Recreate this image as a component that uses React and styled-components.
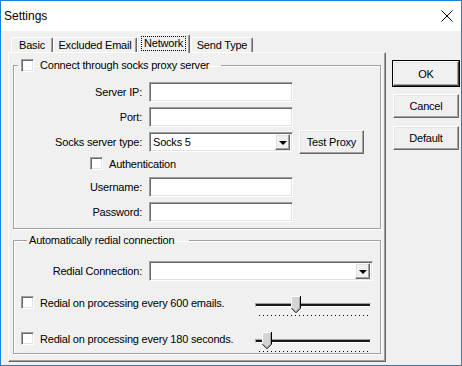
import styled, { createGlobalStyle } from "styled-components";

const GlobalStyle = createGlobalStyle`
    html, body {
        margin: 0;
        padding: 0;
        background: #fff;
    }
    body {
        font-family: "Liberation Sans", Arial, sans-serif;
        font-size: 11px;
        letter-spacing: -0.2px;
        color: #000;
    }
    * {
        box-sizing: border-box;
    }
`;

const sunken = `
    border: 1px solid;
    border-color: #a0a0a0 #fff #fff #a0a0a0;
    box-shadow: inset 1px 1px 0 #696969, inset -1px -1px 0 #e3e3e3;
    background: #fff;
`;

const raised = `
    border: 1px solid;
    border-color: #fff #696969 #696969 #fff;
    box-shadow: inset -1px -1px 0 #a0a0a0, inset 1px 1px 0 #e3e3e3;
    background: #f0f0f0;
`;

const Window = styled.div`
    width: 462px;
    height: 366px;
    border: 1px solid #1883d7;
    background: #f0f0f0;
    display: flex;
    flex-direction: column;
`;

const TitleBar = styled.div`
    flex: none;
    height: 30px;
    background: #fff;
    display: flex;
    align-items: center;
    justify-content: space-between;
    padding: 0 8px 0 3px;
`;

const Title = styled.span`
    font-size: 12px;
    letter-spacing: 0;
`;

const Body = styled.div`
    flex: 1;
    display: flex;
    gap: 7px;
    padding: 3px 2px 0 7px;
`;

const Main = styled.div`
    width: 378px;
    display: flex;
    flex-direction: column;
`;

const TabStrip = styled.div`
    height: 18px;
    display: flex;
    align-items: flex-end;
    padding-left: 3px;
    position: relative;
    z-index: 1;
`;

const Tab = styled.div`
    width: ${(p) => p.$w}px;
    height: ${(p) => (p.$active ? 19 : 15)}px;
    margin-bottom: ${(p) => (p.$active ? -1 : 0)}px;
    margin-left: ${(p) => p.$ml || 0}px;
    display: flex;
    align-items: ${(p) => (p.$active ? "flex-start" : "center")};
    padding-top: ${(p) => (p.$active ? 1 : 0)}px;
    justify-content: center;
    background: #f0f0f0;
    border-top: 1px solid #fff;
    border-left: 1px solid #fff;
    border-right: 1px solid #696969;
    border-radius: 2px 2px 0 0;
    box-shadow: inset -1px 0 0 #a0a0a0;
    white-space: nowrap;
`;

const Focus = styled.span`
    border: 1px dotted #000;
    padding: 0 2px;
    line-height: 13px;
`;

const Panel = styled.div`
    height: 310px;
    border: 1px solid;
    border-color: #fff #696969 #696969 #fff;
    box-shadow: inset -1px -1px 0 #a0a0a0;
    padding: 0 4px;
    display: flex;
    flex-direction: column;
`;

const Group = styled.fieldset`
    margin: ${(p) => p.$mt}px 0 0;
    padding: ${(p) => p.$pt}px 0 ${(p) => p.$pb}px;
    min-width: 0;
    border: 1px solid #a0a0a0;
    box-shadow: inset 1px 1px 0 #fff, 1px 1px 0 #fff;
`;

const Legend = styled.legend`
    margin-left: ${(p) => p.$ml}px;
    padding: 0 ${(p) => p.$pr}px 0 ${(p) => p.$pl}px;
    height: 13px;
    line-height: 13px;
    display: flex;
    align-items: center;
    gap: 6px;
    white-space: nowrap;
`;

const Row = styled.div`
    display: flex;
    align-items: center;
    height: ${(p) => p.$h || 20}px;
    margin-top: ${(p) => p.$mt ?? 5}px;
    padding-left: ${(p) => p.$pl || 0}px;
`;

const Label = styled.span`
    width: 135px;
    padding-right: 7px;
    text-align: right;
    white-space: nowrap;
`;

const TextBox = styled.div`
    ${sunken}
    width: ${(p) => p.$w || 144}px;
    height: 20px;
`;

const Combo = styled.div`
    ${sunken}
    width: ${(p) => p.$w || 144}px;
    height: 20px;
    display: flex;
    align-items: center;
    justify-content: space-between;
    padding: 2px 2px 2px 3px;
`;

const DropButton = styled.span`
    ${raised}
    width: 15px;
    height: 16px;
    display: flex;
    align-items: center;
    justify-content: center;

    &::after {
        content: "";
        border-left: 4px solid transparent;
        border-right: 4px solid transparent;
        border-top: 4px solid #000;
        margin-top: 1px;
    }
`;

const Button = styled.div`
    ${raised}
    width: ${(p) => p.$w || 66}px;
    height: ${(p) => p.$h || 24}px;
    display: flex;
    align-items: center;
    justify-content: center;
    white-space: nowrap;
    margin-left: ${(p) => p.$ml || 0}px;
    ${(p) =>
        p.$default &&
        `
        outline: 1px solid #000;
        outline-offset: 0;
        border-color: #fff #404040 #404040 #fff;
    `}
`;

const CheckBox = styled.span`
    ${sunken}
    flex: none;
    width: 13px;
    height: 13px;
`;

const CheckLabel = styled.label`
    display: flex;
    align-items: center;
    gap: 6px;
    height: 13px;
    white-space: nowrap;
`;

const SliderRow = styled.div`
    display: flex;
    align-items: flex-start;
    justify-content: space-between;
    margin-top: ${(p) => p.$mt}px;
    padding: 0 9px 0 7px;
`;

const SliderBox = styled.div`
    position: relative;
    width: 116px;
    height: 20px;
    padding-top: 7px;
`;

const Track = styled.div`
    height: 4px;
    border: 1px solid;
    border-color: #a0a0a0 #fff #fff #a0a0a0;
    background: #1a1a1a;
`;

const Ticks = styled.div`
    margin: 8px 0 0 4px;
    width: 109px;
    height: 1px;
    background: repeating-linear-gradient(
        to right,
        #000 0 1px,
        transparent 1px 4px
    );
`;

const Thumb = styled.svg`
    position: absolute;
    top: 0;
    left: ${(p) => p.$pos}px;
`;

const Side = styled.div`
    display: flex;
    flex-direction: column;
    gap: 8px;
    padding-top: 27px;
`;

function CloseIcon() {
    return (
        <svg width="12" height="12" viewBox="0 0 12 12">
            <path d="M0.5 0.5 L11.5 11.5 M11.5 0.5 L0.5 11.5" stroke="#000" strokeWidth="1" />
        </svg>
    );
}

function Slider({ pos }) {
    return (
        <SliderBox>
            <Track />
            <Thumb $pos={pos} width="10" height="17" viewBox="0 0 10 17">
                <polygon points="0,0 10,0 10,12 5,17 0,12" fill="#d4d4d4" />
                <polyline points="0.5,12 0.5,0.5 9,0.5" fill="none" stroke="#fff" />
                <polyline points="9.5,0 9.5,12.2 5,16.7 0.5,12.2" fill="none" stroke="#000" />
                <polyline points="8.5,1 8.5,11.8 5,15.3" fill="none" stroke="#a0a0a0" />
            </Thumb>
            <Ticks />
        </SliderBox>
    );
}

export default function App() {
    return (
        <>
            <GlobalStyle />
            <Window>
                <TitleBar>
                    <Title>Settings</Title>
                    <CloseIcon />
                </TitleBar>
                <Body>
                    <Main>
                        <TabStrip>
                            <Tab $w={42}>Basic</Tab>
                            <Tab $w={84}>Excluded Email</Tab>
                            <Tab $w={53} $active>
                                <Focus>Network</Focus>
                            </Tab>
                            <Tab $w={62} $ml={1}>
                                Send Type
                            </Tab>
                        </TabStrip>
                        <Panel>
                            <Group $mt={6} $pt={10} $pb={6}>
                                <Legend $ml={4} $pl={3} $pr={12}>
                                    <CheckBox />
                                    Connect through socks proxy server
                                </Legend>
                                <Row $mt={0}>
                                    <Label>Server IP:</Label>
                                    <TextBox />
                                </Row>
                                <Row>
                                    <Label>Port:</Label>
                                    <TextBox />
                                </Row>
                                <Row>
                                    <Label>Socks server type:</Label>
                                    <Combo>
                                        Socks 5
                                        <DropButton />
                                    </Combo>
                                    <Button $w={65} $ml={6}>
                                        Test Proxy
                                    </Button>
                                </Row>
                                <Row $h={13} $pl={76}>
                                    <CheckLabel>
                                        <CheckBox />
                                        Authentication
                                    </CheckLabel>
                                </Row>
                                <Row $mt={7}>
                                    <Label>Username:</Label>
                                    <TextBox />
                                </Row>
                                <Row>
                                    <Label>Password:</Label>
                                    <TextBox />
                                </Row>
                            </Group>
                            <Group $mt={5} $pt={14} $pb={1}>
                                <Legend $ml={13} $pl={2} $pr={15}>
                                    Automatically redial connection
                                </Legend>
                                <Row $mt={0}>
                                    <Label>Redial Connection:</Label>
                                    <Combo $w={224}>
                                        <span />
                                        <DropButton />
                                    </Combo>
                                </Row>
                                <SliderRow $mt={15}>
                                    <CheckLabel>
                                        <CheckBox />
                                        Redial on processing every 600 emails.
                                    </CheckLabel>
                                    <Slider pos={36} />
                                </SliderRow>
                                <SliderRow $mt={16}>
                                    <CheckLabel>
                                        <CheckBox />
                                        Redial on processing every 180 seconds.
                                    </CheckLabel>
                                    <Slider pos={7} />
                                </SliderRow>
                            </Group>
                        </Panel>
                    </Main>
                    <Side>
                        <Button $default $h={25}>
                            OK
                        </Button>
                        <Button>Cancel</Button>
                        <Button>Default</Button>
                    </Side>
                </Body>
            </Window>
        </>
    );
}
